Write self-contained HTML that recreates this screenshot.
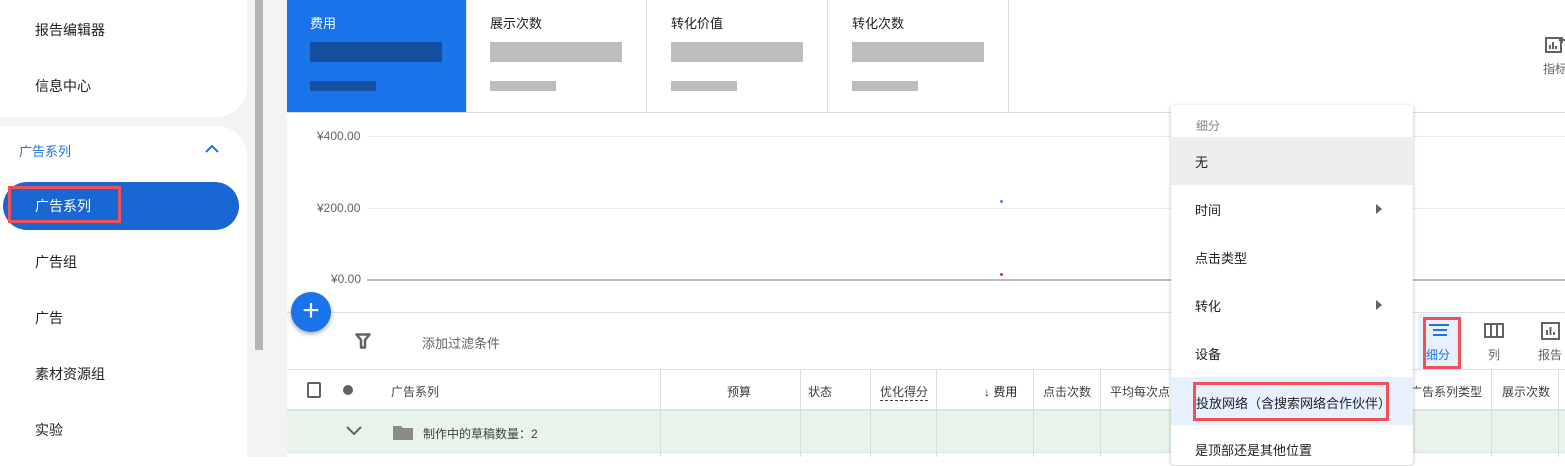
<!DOCTYPE html>
<html><head><meta charset="utf-8"><style>
*{margin:0;padding:0;box-sizing:border-box}
body{width:1565px;height:457px;overflow:hidden;position:relative;background:#fff;font-family:"Liberation Sans","Noto Sans CJK SC",sans-serif;color:#202124;font-size:13px}
.a{position:absolute;white-space:nowrap}
.t{font-size:14px}
.g{background:#bdbdbd;position:absolute}
.hl{position:absolute;height:1px;background:#e0e0e0}
.vl{position:absolute;width:1px;background:#dadce0}
.hd{font-size:12px;color:#3c4043}
</style></head><body>
<div class="a" style="left:0;top:0;width:287px;height:457px;background:#f1f3f4"></div>
<div class="a" style="left:0;top:-20px;width:247px;height:137px;background:#fff;border-radius:0 0 30px 0"></div>
<div class="a" style="left:0;top:126px;width:247px;height:340px;background:#fff;border-radius:0 30px 0 0"></div>
<div class="a t" style="left:35px;top:20px">报告编辑器</div>
<div class="a t" style="left:35px;top:76px">信息中心</div>
<div class="a" style="left:19px;top:141px;color:#1a73e8;font-size:13px">广告系列</div>
<svg class="a" style="left:204px;top:143px" width="16" height="12"><path d="M2 9 L8 3 L14 9" stroke="#1a73e8" stroke-width="2" fill="none"/></svg>
<div class="a" style="left:3px;top:182px;width:236px;height:48px;background:#1967d2;border-radius:24px"></div>
<div class="a" style="left:8px;top:186px;width:113px;height:37px;border:3px solid #f0505a"></div>
<div class="a t" style="left:35px;top:196px;color:#fff">广告系列</div>
<div class="a t" style="left:35px;top:252px">广告组</div>
<div class="a t" style="left:35px;top:308px">广告</div>
<div class="a t" style="left:35px;top:364px">素材资源组</div>
<div class="a t" style="left:35px;top:420px">实验</div>
<div class="a" style="left:255px;top:0;width:8px;height:350px;background:#b4b4b4"></div>
<div class="a" style="left:287px;top:0;width:1278px;height:457px;background:#fff"></div>
<div class="a" style="left:287px;top:0;width:179px;height:112px;background:#1a73e8"></div>
<div class="a" style="left:310px;top:13px;color:#fff">费用</div>
<div class="a" style="left:310px;top:42px;width:132px;height:20px;background:#1550a0"></div>
<div class="a" style="left:310px;top:81px;width:66px;height:10px;background:#1550a0"></div>
<div class="a" style="left:490px;top:13px">展示次数</div>
<div class="g" style="left:490px;top:42px;width:132px;height:20px"></div><div class="g" style="left:490px;top:81px;width:66px;height:10px"></div>
<div class="a" style="left:671px;top:13px">转化价值</div>
<div class="g" style="left:671px;top:42px;width:132px;height:20px"></div><div class="g" style="left:671px;top:81px;width:66px;height:10px"></div>
<div class="a" style="left:852px;top:13px">转化次数</div>
<div class="g" style="left:852px;top:42px;width:132px;height:20px"></div><div class="g" style="left:852px;top:81px;width:66px;height:10px"></div>
<div class="vl" style="left:466px;top:0;height:112px"></div><div class="vl" style="left:646px;top:0;height:112px"></div><div class="vl" style="left:827px;top:0;height:112px"></div><div class="vl" style="left:1008px;top:0;height:112px"></div>
<div class="hl" style="left:287px;top:112px;width:1278px;background:#dadce0"></div>
<svg class="a" style="left:1545px;top:36px" width="20" height="18"><rect x="1" y="2" width="15" height="14" fill="none" stroke="#5f6368" stroke-width="2"/><path d="M5 13V9M8 13V6M11 13V10M14 4h6M17 1v6" stroke="#5f6368" stroke-width="2"/></svg>
<div class="a" style="left:1543px;top:60px;font-size:12px;color:#5f6368">指标</div>
<div class="a" style="left:317px;top:129px;font-size:12px;color:#5f6368">¥400.00</div>
<div class="a" style="left:317px;top:201px;font-size:12px;color:#5f6368">¥200.00</div>
<div class="a" style="left:331px;top:272px;font-size:12px;color:#5f6368">¥0.00</div>
<div class="hl" style="left:367px;top:136px;width:1198px;background:#ebebeb"></div>
<div class="hl" style="left:367px;top:208px;width:1198px;background:#ebebeb"></div>
<div class="hl" style="left:367px;top:279px;width:1198px;height:2px;background:#bdbdbd"></div>
<div class="a" style="left:1000px;top:200px;width:3px;height:3px;border-radius:50%;background:#4285f4"></div>
<div class="a" style="left:1000px;top:273px;width:3px;height:3px;border-radius:50%;background:#d93025"></div>
<div class="hl" style="left:287px;top:312px;width:1278px"></div>
<div class="a" style="left:291px;top:292px;width:40px;height:40px;border-radius:50%;background:#1a73e8;box-shadow:0 2px 5px rgba(0,0,0,.35);color:#fff;font-size:30px;line-height:38px;text-align:center">+</div>
<svg class="a" style="left:355px;top:333px" width="16" height="16"><path d="M1.5 1.5h13L10 7v7.5H6V7z" fill="none" stroke="#5f6368" stroke-width="2.5" stroke-linejoin="round"/></svg>
<div class="a" style="left:422px;top:333px;color:#5f6368">添加过滤条件</div>
<div class="a" style="left:1418px;top:314px;width:44px;height:56px;background:#e8f0fe"></div>
<div class="a" style="left:1423px;top:317px;width:38px;height:52px;border:3px solid #f0505a"></div>
<svg class="a" style="left:1429px;top:323px" width="20" height="14"><path d="M0 2h20M4 7h14M4 12h14" stroke="#1a73e8" stroke-width="2"/></svg>
<div class="a" style="left:1426px;top:346px;color:#1a73e8;font-size:12px">细分</div>
<svg class="a" style="left:1484px;top:323px" width="20" height="16"><rect x="1" y="1" width="18" height="13" fill="none" stroke="#5f6368" stroke-width="2"/><path d="M7 1v13M13 1v13" stroke="#5f6368" stroke-width="2"/></svg>
<div class="a" style="left:1488px;top:346px;color:#5f6368;font-size:12px">列</div>
<svg class="a" style="left:1541px;top:322px" width="20" height="18"><rect x="1" y="1" width="17" height="16" fill="none" stroke="#5f6368" stroke-width="2"/><path d="M6 13V8M9.5 13V5M13 13V10" stroke="#5f6368" stroke-width="2"/></svg>
<div class="a" style="left:1538px;top:346px;color:#5f6368;font-size:12px">报告</div>
<div class="hl" style="left:287px;top:369px;width:1278px"></div>
<div class="hl" style="left:287px;top:409px;width:1278px;height:2px"></div>
<div class="a" style="left:287px;top:411px;width:1278px;height:41px;background:#e6f4ea"></div>
<div class="hl" style="left:287px;top:452px;width:1278px"></div>
<div class="vl" style="left:660px;top:370px;height:87px"></div><div class="vl" style="left:800px;top:370px;height:87px"></div><div class="vl" style="left:870px;top:370px;height:87px"></div><div class="vl" style="left:936px;top:370px;height:87px"></div><div class="vl" style="left:1033px;top:370px;height:87px"></div><div class="vl" style="left:1100px;top:370px;height:87px"></div><div class="vl" style="left:1491px;top:370px;height:87px"></div><div class="vl" style="left:1558px;top:370px;height:87px"></div>
<div class="a" style="left:307px;top:382px;width:14px;height:16px;border:2px solid #5f6368;border-radius:2px"></div>
<div class="a" style="left:343px;top:385px;width:10px;height:10px;border-radius:50%;background:#5f6368"></div>
<div class="a hd" style="left:391px;top:383px">广告系列</div>
<div class="a hd" style="left:727px;top:383px">预算</div>
<div class="a hd" style="left:808px;top:383px">状态</div>
<div class="a hd" style="left:880px;top:383px;border-bottom:1px dashed #3c4043">优化得分</div>
<div class="a hd" style="left:984px;top:383px;color:#202124">↓ 费用</div>
<div class="a hd" style="left:1043px;top:383px">点击次数</div>
<div class="a hd" style="left:1110px;top:383px">平均每次点</div>
<div class="a hd" style="left:1410px;top:383px">广告系列类型</div>
<div class="a hd" style="left:1502px;top:383px">展示次数</div>
<svg class="a" style="left:346px;top:426px" width="16" height="10"><path d="M1 1l7 7 7-7" stroke="#5f6368" stroke-width="2" fill="none"/></svg>
<svg class="a" style="left:392px;top:423px" width="22" height="18"><path d="M1 3h8l2 2h10v12H1z" fill="#8a8a8a"/></svg>
<div class="a hd" style="left:423px;top:425px">制作中的草稿数量：2</div>
<div class="a" style="left:1171px;top:105px;width:242px;height:360px;background:#fff;border-radius:4px;box-shadow:0 1px 4px rgba(0,0,0,.25)"></div>
<div class="a" style="left:1196px;top:117px;font-size:12px;color:#80868b">细分</div>
<div class="a" style="left:1171px;top:137px;width:242px;height:48px;background:#eeeeee"></div>
<div class="a" style="left:1195px;top:152px">无</div>
<div class="a" style="left:1195px;top:200px">时间</div>
<svg class="a" style="left:1375px;top:203px" width="8" height="12"><path d="M1 1l6 5-6 5z" fill="#5f6368"/></svg>
<div class="a" style="left:1195px;top:248px">点击类型</div>
<div class="a" style="left:1195px;top:296px">转化</div>
<svg class="a" style="left:1375px;top:299px" width="8" height="12"><path d="M1 1l6 5-6 5z" fill="#5f6368"/></svg>
<div class="a" style="left:1195px;top:344px">设备</div>
<div class="a" style="left:1171px;top:377px;width:242px;height:48px;background:#e8f0fe"></div>
<div class="a" style="left:1193px;top:382px;width:196px;height:39px;border:3px solid #f0505a"></div>
<div class="a" style="left:1196px;top:393px">投放网络（含搜索网络合作伙伴）</div>
<div class="a" style="left:1195px;top:440px">是顶部还是其他位置</div>
</body></html>
